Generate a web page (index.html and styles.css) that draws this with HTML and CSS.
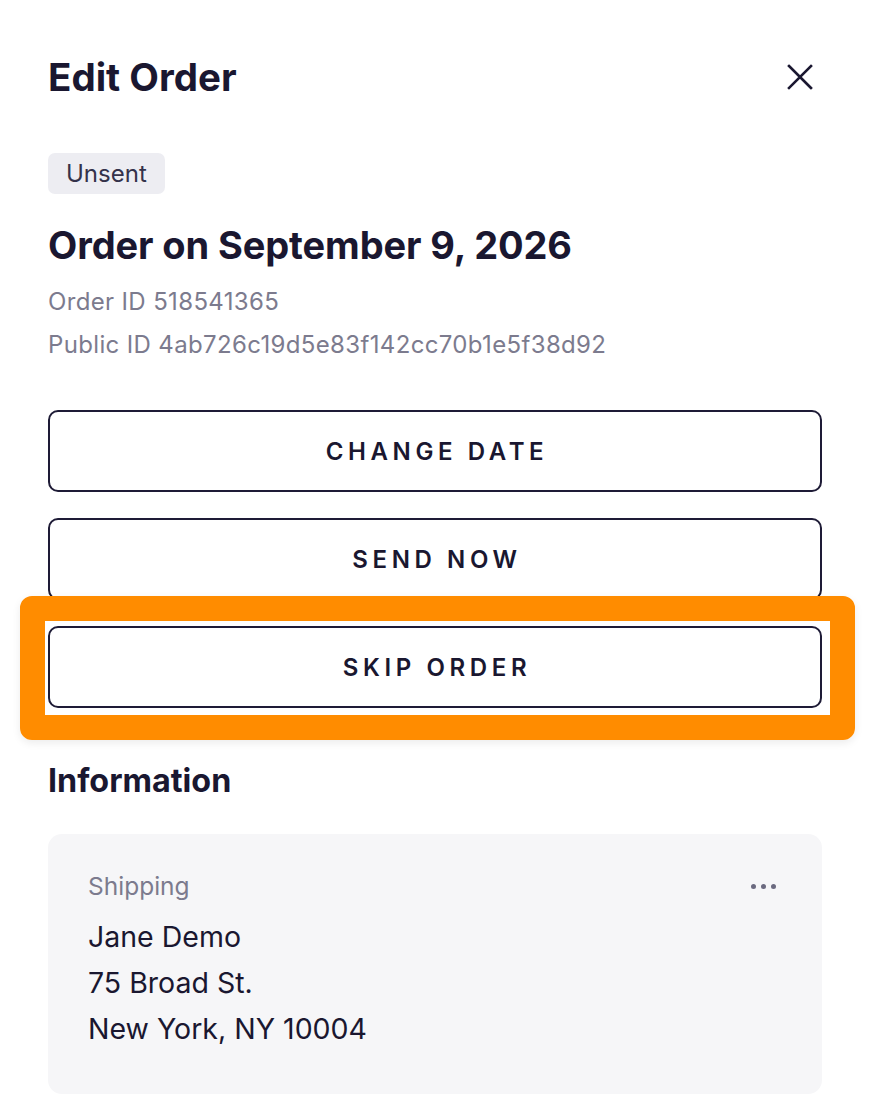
FILE: index.html
```html
<!DOCTYPE html>
<html lang="en">
<head>
<meta charset="utf-8">
<title>Edit Order</title>
<link rel="stylesheet" href="styles.css">
</head>
<body>
<div class="panel">
  <header class="panel-header">
    <h1 class="panel-title">Edit Order</h1>
    <button class="close-btn" aria-label="Close">
      <svg width="26" height="26" viewBox="0 0 26 26"><path d="M2 2 L24 24 M24 2 L2 24" stroke="#1a1730" stroke-width="2.6" stroke-linecap="square" fill="none"/></svg>
    </button>
  </header>

  <span class="badge">Unsent</span>

  <h2 class="order-title">Order on September 9, 2026</h2>
  <p class="meta meta-first">Order ID 518541365</p>
  <p class="meta">Public ID 4ab726c19d5e83f142cc70b1e5f38d92</p>

  <div class="actions">
    <button class="action-btn">CHANGE DATE</button>
    <button class="action-btn">SEND NOW</button>
    <div class="highlight-wrap">
      <button class="action-btn">SKIP ORDER</button>
      <div class="highlight"></div>
    </div>
  </div>

  <h3 class="section-title">Information</h3>

  <div class="info-card">
    <div class="info-head">
      <span class="info-label">Shipping</span>
      <span class="dots"><i></i><i></i><i></i></span>
    </div>
    <p class="addr">Jane Demo</p>
    <p class="addr">75 Broad St.</p>
    <p class="addr">New York, NY 10004</p>
  </div>
</div>
</body>
</html>
```

FILE: styles.css
```css
* { box-sizing: border-box; }
html, body { margin: 0; padding: 0; background: #ffffff; }
body {
  font-family: "Inter", "Liberation Sans", sans-serif;
  color: #1a1730;
}
.panel {
  width: 871px;
  padding: 0 49px 0 48px;
}
.panel-header {
  display: flex;
  justify-content: space-between;
  align-items: center;
  padding-top: 51px;
  height: 103px;
}
.panel-title {
  margin: 0;
  font-size: 38.5px;
  line-height: 50px;
  font-weight: 700;
}
.close-btn {
  border: 0;
  background: none;
  padding: 0;
  margin-right: 9px;
  width: 26px;
  height: 26px;
  display: flex;
}
.badge {
  display: inline-block;
  margin-top: 50px;
  height: 41px;
  line-height: 41px;
  padding: 0 18px;
  background: #ededf2;
  border-radius: 7px;
  font-size: 24px;
  color: #34324a;
}
.order-title {
  margin: 26px 0 0;
  font-size: 38px;
  line-height: 50px;
  font-weight: 700;
  letter-spacing: -0.1px;
}
.meta {
  margin: 0;
  font-size: 24px;
  line-height: 43px;
  letter-spacing: 0.35px;
  color: #7c7b8e;
}
.meta-first { margin-top: 10px; }
.actions {
  display: flex;
  flex-direction: column;
  gap: 26px;
  margin-top: 44px;
}
.action-btn {
  display: block;
  width: 100%;
  height: 82px;
  padding: 0 0 0 4px;
  background: #fff;
  border: 2px solid #1e1b36;
  border-radius: 10px;
  font-family: inherit;
  font-size: 24px;
  font-weight: 600;
  letter-spacing: 4.6px;
  color: #1a1730;
}
.highlight-wrap { position: relative; }
.highlight {
  position: absolute;
  left: -28px;
  right: -33px;
  top: -30px;
  bottom: -32px;
  border: 25px solid #ff8c00;
  border-radius: 12px;
  box-shadow: 0 3px 8px rgba(0, 0, 0, 0.08);
  pointer-events: none;
}
.section-title {
  margin: 53px 0 0;
  font-size: 32.3px;
  line-height: 40px;
  font-weight: 700;
}
.info-card {
  margin-top: 33px;
  background: #f6f6f8;
  border-radius: 14px;
  padding: 36px 46px 42px 40px;
}
.info-head {
  display: flex;
  justify-content: space-between;
  align-items: center;
  margin-bottom: 12px;
}
.info-label {
  font-size: 24.5px;
  line-height: 32px;
  color: #7c7b8e;
}
.dots {
  display: flex;
  gap: 5px;
}
.dots i {
  width: 5px;
  height: 5px;
  border-radius: 50%;
  background: #6b6a80;
}
.addr {
  margin: 0;
  font-size: 28.5px;
  line-height: 46px;
  color: #1a1730;
}
```
